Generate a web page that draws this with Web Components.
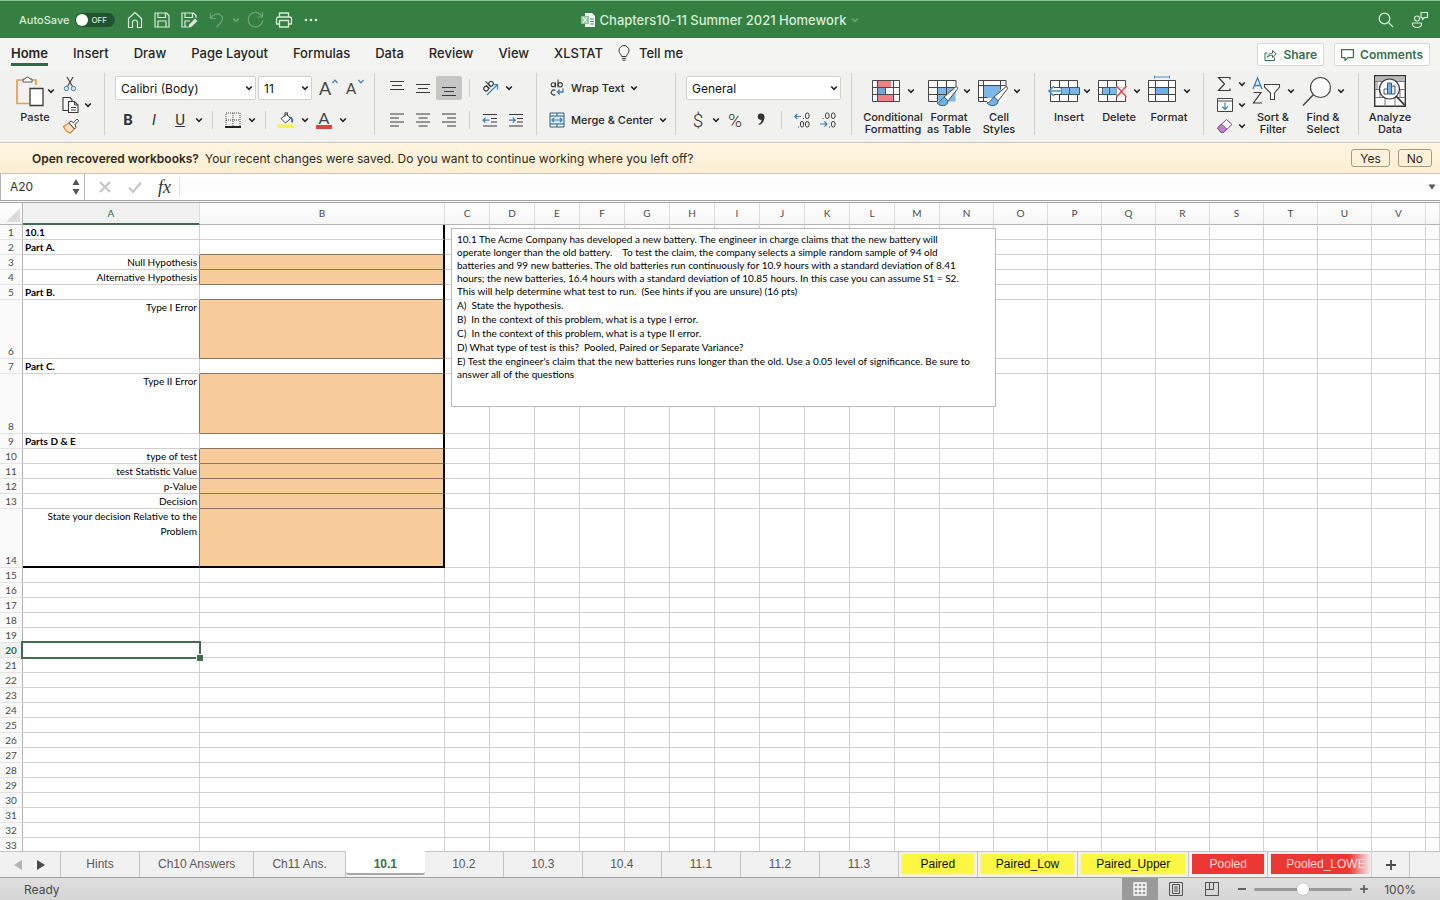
<!DOCTYPE html>
<html lang="en">
<head>
<meta charset="utf-8">
<title>Chapters10-11 Summer 2021 Homework</title>
<style>
html, body { margin: 0; height: 100%; }
body {
  display: flex; flex-direction: column; overflow: hidden;
  font-family: Inter, "Liberation Sans", sans-serif; font-size: 12px; color: #262626;
  background: #f2f2f1;
}
workbook-grid { flex: 1 1 0; min-height: 0; }
</style>
</head>
<body>
<title-bar></title-bar>
<menu-tabs></menu-tabs>
<ribbon-bar></ribbon-bar>
<notice-bar><b slot="title">Open recovered workbooks?</b>Your recent changes were saved. Do you want to continue working where you left off?</notice-bar>
<formula-bar></formula-bar>
<workbook-grid></workbook-grid>
<sheet-tabs></sheet-tabs>
<status-bar></status-bar>

<script>
const define = (name, html, setup) => {
  const tpl = document.createElement('template');
  tpl.innerHTML = html;
  customElements.define(name, class extends HTMLElement {
    constructor() {
      super();
      this.attachShadow({ mode: 'open' }).append(tpl.content.cloneNode(true));
    }
    connectedCallback() { if (setup) setup(this, this.shadowRoot); }
  });
};

/* name: [width, height, markup] */
const K = 'fill="none" stroke="#3b3b3b"';
const B = 'fill="none" stroke="#3f7fae"';
const ICONS = {
  chev: [8, 8, '<path d="M1.2 2.5 4 5.4 6.8 2.5" fill="none" stroke="currentColor" stroke-width="1.6"/>'],
  home: [16, 18, '<path d="M1.5 7.5 8 1.5l6.5 6v9h-4v-5a2.5 2.5 0 0 0-5 0v5h-4z" fill="none" stroke="currentColor" stroke-width="1.2" stroke-linejoin="round"/>'],
  save: [16, 16, '<path d="M1 1h11.500L15 3.500V15H1zM4 1v4.500h7.500V1M4 15V9h8v6" fill="none" stroke="currentColor" stroke-width="1.200" stroke-linejoin="round"/>'],
  saveas: [17, 16, '<path d="M7 15H1V1h11.500L15 3.500V6M4 1v4.500h7.500V1M4 15V9h5" fill="none" stroke="currentColor" stroke-width="1.200"/><path d="M14 6.500l2.500 2.500-6 5.800-3.200 1 1-3.300z" fill="currentColor"/>'],
  undo: [16, 16, '<path d="M1.500 1v5.500H7M1.800 6.300C4 2.500 8 .500 11.500 3c3 2.300 2.300 5.800 0 8L7.500 15" fill="none" stroke="currentColor" stroke-width="1.200"/>'],
  redo: [17, 17, '<path d="M15.500 1v5h-5M15.200 6A7.200 7.200 0 1 0 15.700 9" fill="none" stroke="currentColor" stroke-width="1.200"/>'],
  print: [18, 16, '<path d="M4.500 5V1h9v4M4.500 12H1.500V7a2 2 0 0 1 2-2h11a2 2 0 0 1 2 2v5h-3M4.500 8.500h9V15h-9z" fill="none" stroke="currentColor" stroke-width="1.300" stroke-linejoin="round"/>'],
  dots: [14, 16, '<circle cx="2" cy="8" r="1.300" fill="currentColor"/><circle cx="7" cy="8" r="1.300" fill="currentColor"/><circle cx="12" cy="8" r="1.300" fill="currentColor"/>'],
  file: [14, 14, '<path d="M4 0h7l3 3v11H4z" fill="#f4fbf4"/><path d="M9 6h4M9 8.500h4M9 11h4" stroke="#4c9a5c"/><path d="M0 3h8v8H0z" fill="#8cc79a"/><path d="M2 4.500l4 5M6 4.500l-4 5" stroke="#fff" stroke-width="1.200"/>'],
  search: [16, 16, '<circle cx="6.500" cy="6.500" r="5.300" fill="none" stroke="currentColor" stroke-width="1.200"/><path d="M10.400 10.400 15 15" stroke="currentColor" stroke-width="1.300"/>'],
  people: [18, 18, '<circle cx="6" cy="7.500" r="2.500" fill="none" stroke="currentColor" stroke-width="1.200"/><path d="M1.500 12h9c.500 3-1.500 4.500-4.500 4.500S1 15 1.500 12zM10 1.500h6.500v5h-3l-2 2v-2H10z" fill="none" stroke="currentColor" stroke-width="1.200" stroke-linejoin="round"/>'],
  bulb: [12, 16, `<path d="M3.700 11.500C3.500 9.500 1 8.500 1 5.600a5 5 0 0 1 10 0c0 2.900-2.500 3.900-2.700 5.900zM4 13.400h4M4.500 15.200h3" ${K}/>`],
  share: [13, 12, '<path d="M3.500 4H1v7.500h9.500V8.500M3.500 8.500c.200-3 2-4.300 5-4.300V1.500L12.300 5 8.500 8.500V6.200c-2.500-.100-4 .600-5 2.300z" fill="none" stroke="#35704c" stroke-linejoin="round"/>'],
  comment: [13, 12, '<path d="M.600.600h11.800v8H7L4 11.500V8.600H.600z" fill="none" stroke="#35704c" stroke-width="1.200" stroke-linejoin="round"/>'],

  paste: [28, 32, '<path d="M7 5H1v23.500h12M15 5h5v5" fill="none" stroke="#e3a04d" stroke-width="1.700"/><path d="M7 7V4h2a2.600 2.600 0 0 1 5 0h2v3z" fill="#fff" stroke="#555"/><path d="M14 13.500h13v17H14z" fill="#fff" stroke="#3b3b3b" stroke-width="1.300"/>'],
  cut: [16, 16, `<path d="M5 1l5.500 9.500M11 1 5.500 10.500" ${K} stroke-width="1.100"/><circle cx="4.500" cy="12.500" r="2.200" fill="#d9ebf7" stroke="#3f7fae"/><circle cx="11.500" cy="12.500" r="2.200" fill="#d9ebf7" stroke="#3f7fae"/>`],
  copy: [18, 18, '<path d="M1 1.500h7l2 2v11H1z" fill="#f7f7f7" stroke="#3b3b3b" stroke-width="1.100"/><path d="M6.500 5.500h6l3.500 3.500v7.500H6.500z" fill="#fff" stroke="#3b3b3b" stroke-width="1.100"/><path d="M12.500 5.500V9H16M9 11.500h5M9 14h5" fill="none" stroke="#3b3b3b"/>'],
  painter: [18, 16, '<path d="M1.500 8.500 7 5l5.500 5.500-4 4.500c-3-.500-5.500-3-7-6.500z" fill="#fbe3c4" stroke="#d98a3c" stroke-width="1.300"/><path d="M7 4.500l2-1.500 2.500 1.800L15 1l1.800 1.800-3.800 3.700 1 3-1.500 1.500z" fill="#fff" stroke="#444"/>'],
  grow: [18, 18, `<path d="M12.500 5l2.500-2.800L17.500 5" ${B} stroke-width="1.200"/>`],
  shrink: [18, 18, `<path d="M12.500 2l2.500 2.800L17.500 2" ${B} stroke-width="1.200"/>`],
  borders: [16, 16, '<path d="M1 1h14v14H1zM8 1v14M1 8h14" fill="none" stroke="#444" stroke-dasharray="1 1"/><path d="M0 15h16" stroke="#222" stroke-width="2"/>'],
  bucket: [18, 16, '<path d="M1 12.500h15V16H1z" fill="#f7f34b"/><path d="M4 6.500 9.500 2l4 4.500L8.500 11z" fill="#fff" stroke="#444" stroke-linejoin="round"/><path d="M8 5V.800h2.500V4" fill="none" stroke="#444"/><path d="M12.500 5.500c2.500 0 3 2 2.500 5" fill="none" stroke="#2e6da4" stroke-width="1.800"/>'],
  top: [16, 18, `<path d="M1 2.500h14M3 6.500h10M1 10.500h14" ${K} stroke-width="1.100"/>`],
  mid: [16, 18, `<path d="M1 5.500h14M3 9.500h10M1 13.500h14" ${K} stroke-width="1.100"/>`],
  bottom: [16, 18, `<path d="M1 8.500h14M3 12.500h10M1 16.500h14" ${K} stroke-width="1.100"/>`],
  left: [16, 16, `<path d="M1 2h14M1 6h9M1 10h14M1 14h9" ${K} stroke-width="1.200"/>`],
  center: [16, 16, `<path d="M1 2h14M3.500 6h9M1 10h14M3.500 14h9" ${K} stroke-width="1.200"/>`],
  right: [16, 16, `<path d="M1 2h14M6 6h9M1 10h14M6 14h9" ${K} stroke-width="1.200"/>`],
  orient: [18, 18, `<g transform="rotate(-45 7 7)" ${K} stroke-width="1.100"><circle cx="3.800" cy="7.500" r="2.300"/><path d="M6.200 5v5M8.500 2v8"/><circle cx="10.800" cy="7.500" r="2.300"/></g><path d="M6 16 16 6M11.500 5.500H16.500V10.500" ${B} stroke-width="1.200"/>`],
  outdent: [16, 16, `<path d="M1 2.500h14M9 6.500h6M9 10h6M1 14h14" ${K} stroke-width="1.200"/><path d="M7.500 8.200H1M3.500 5.700 1 8.200l2.500 2.500" ${B} stroke-width="1.200"/>`],
  indent: [16, 16, `<path d="M1 2.500h14M9 6.500h6M9 10h6M1 14h14" ${K} stroke-width="1.200"/><path d="M1 8.200h6M4.800 5.700l2.500 2.500-2.500 2.500" ${B} stroke-width="1.200"/>`],
  wrap: [16, 18, `<g ${K} stroke-width="1.100"><circle cx="4.200" cy="5.800" r="2"/><path d="M6.500 3.500v4.800M9 .500v7.800M6.300 11.500a2.500 2.500 0 1 0 0 4"/><circle cx="11.200" cy="5.800" r="2.200"/></g><path d="M14 9.500v3.500H8.500M10.800 10.600 8.300 13l2.500 2.500" ${B} stroke-width="1.300"/>`],
  merge: [16, 16, `<path d="M1 4h14v8H1z" fill="#d3e8f8"/><path d="M1 1h14v14H1zM1 4h14M1 12h14M8 1v3M8 12v3" fill="none" stroke="#2f5f80"/><path d="M3 8h10M5 6 3 8l2 2M11 6l2 2-2 2" ${B} stroke-width="1.200"/>`],
  comma: [12, 16, '<path d="M6 1.500a3.300 3.300 0 0 1 3.500 3.500c0 4-2 6.500-5.500 8l-.500-.800C5.500 11 6.500 9.500 6.700 7.800 4.500 8.200 2.700 7 2.700 4.800A3.200 3.200 0 0 1 6 1.500z" fill="#333"/>'],
  incdec: [16, 16, `<g ${K}><rect x="11.500" y="1" width="3.500" height="5.500" rx="1.700"/><rect x="6.500" y="9.500" width="3" height="5.500" rx="1.500"/><rect x="11.500" y="9.500" width="3.500" height="5.500" rx="1.700"/><path d="M9 6.500h1M4 15h1"/></g><path d="M7 4.500H.800M3.300 2 .800 4.500 3.300 7" ${B} stroke-width="1.200"/>`],
  decdec: [16, 16, `<g ${K}><rect x="5.500" y="1" width="3.500" height="5.500" rx="1.700"/><rect x="11.500" y="1" width="3.500" height="5.500" rx="1.700"/><rect x="11.500" y="9.500" width="3.500" height="5.500" rx="1.700"/><path d="M2.500 6.500h1M9 15h1"/></g><path d="M0 12h7M4.500 9.500 7 12l-2.500 2.500" ${B} stroke-width="1.200"/>`],

  condfmt: [32, 32, '<path d="M.500 5.500h27v21H.500z" fill="#fff"/><path d="M6 6h13v6H6zM6 19h15v7H6z" fill="#ee8183"/><path d="M6 12h7v7H6z" fill="#6fa6dc"/><path d="M.500 5.500h27v21H.500zM.500 12.500h27M.500 19.500h27M5.500 5.500v21M21.500 5.500v21M13.500 12.500v7" fill="none" stroke="#4a4a4a"/>'],
  fmttable: [32, 32, '<path d="M.500 5.500h27v21H.500z" fill="#fff"/><path d="M9.500 12.500h18v14h-18z" fill="#7db7e8"/><path d="M28 12V5.500H.500v21H9M.500 12.500h27M.500 19.500h24M9.500 5.500v21M18.500 5.500v18" fill="none" stroke="#444"/><path d="M16 22 27 12.500c2-1.500 3.500 0 2 2L20 26z" fill="#fff" stroke="#444"/><path d="M17 22.500c-4 0-3 4-8 5.500 3 4 11 3.500 11-2z" fill="#76b0e0" stroke="#2f5f80"/>'],
  cellstyle: [32, 32, '<path d="M.500 5.500h27v21H.500z" fill="#fff"/><path d="M5.500 11h17v12h-17z" fill="#7db7e8"/><path d="M28 12V5.500H.500v21H9M.500 10.500h27M.500 22.500h9M5.500 5.500v21M22.500 5.500v9" fill="none" stroke="#444"/><path d="M16 22 27 12.500c2-1.500 3.500 0 2 2L20 26z" fill="#fff" stroke="#444"/><path d="M17 22.500c-4 0-3 4-8 5.500 3 4 11 3.500 11-2z" fill="#76b0e0" stroke="#2f5f80"/>'],
  insert: [32, 32, '<path d="M2.500 5.500h27v21h-27z" fill="#fff" stroke="#444"/><path d="M2.500 12.500h27M2.500 19.500h27M11.500 5.500v7M20.500 5.500v7M11.500 19.500v7M20.500 19.500v7" stroke="#444"/><path d="M13 12.500h18.500v7H13z" fill="#7db7e8" stroke="#2f5f80"/><path d="M21.500 12.500v7" stroke="#2f5f80"/><path d="M0 16l5-5h1v3h7v4H6v3H5z" fill="#fff"/><path d="M14 16H1M6 11l-5 5 5 5" fill="none" stroke="#4a8fc4" stroke-width="1.600"/>'],
  delete: [32, 32, '<path d="M.500 5.500h27v21H.500z" fill="#fff" stroke="#444"/><path d="M.500 12.500h27M.500 19.500h27M9.500 5.500v7M18.500 5.500v7M9.500 19.500v7M18.500 19.500v7" stroke="#444"/><path d="M4.500 12.500h14v7h-14z" fill="#7db7e8" stroke="#2f5f80"/><path d="M11.500 12.500v7" stroke="#2f5f80"/><path d="M18.500 11h10v11h-10z" fill="#fff" opacity=".8"/><path d="M18.500 11l10 11M28.500 11l-10 11" stroke="#dc4a4d" stroke-width="1.500"/>'],
  format: [32, 32, '<path d="M6.500 2h15M6.500 .500v3M21.500 .500v3" stroke="#4a8fc4"/><path d="M.500 5.500h27v21H.500z" fill="#fff"/><path d="M7 12.500h13v7H7z" fill="#6fb0ea"/><path d="M.500 5.500h27v21H.500zM.500 12.500h27M.500 19.500h27M7.500 5.500v21M20.500 5.500v21" fill="none" stroke="#444"/>'],
  sigma: [16, 16, `<path d="M14 3.500V1.500H2.500L8.500 8l-6 6.500H14v-2" ${K} stroke-width="1.200"/>`],
  filldown: [18, 16, '<path d="M1.500 1.500h15v13h-15z" fill="#fff" stroke="#444"/><path d="M1.500 4h15" stroke="#444"/><path d="M9 5.500v6.500M6 9.500l3 3 3-3" fill="none" stroke="#3f7fae" stroke-width="1.200"/>'],
  eraser: [18, 16, '<path d="M1.500 10 10.500 1.500l5.500 5-8.500 8H5z" fill="#fff" stroke="#7d4a86"/><path d="M1.500 10 5.500 6.200l5.500 5-3.500 3.300H5z" fill="#c77fd0" stroke="#7d4a86"/>'],
  sort: [32, 32, `<path d="M1 14 5.500 3 10 14M2.500 10.500h6" ${B} stroke-width="1.300"/><path d="M1.500 17.500H9L1.500 28H10" ${K} stroke-width="1.200"/><path d="M12.500 9.500h15v2.500l-5 6v6.500h-4V18l-6-6z" fill="#fff" stroke="#444" stroke-width="1.100"/>`],
  find: [32, 32, '<circle cx="18.500" cy="12.500" r="10" fill="#fff" stroke="#444" stroke-width="1.200"/><path d="M11.300 19.700 1 30.500" stroke="#444" stroke-width="1.400"/>'],
  analyze: [32, 32, '<path d="M.700.700h30.600v30.600H.700z" fill="#fff" stroke="#333" stroke-width="1.400"/><path d="M1.500 1.500h29v5h-29z" fill="#b9b9b9"/><path d="M1 6.500h30M1 14.500h30M1 22.500h30M11 22.500v9M21 22.500v9M6 14.500v8M26 14.500v8M3 6.500v8" stroke="#777"/><circle cx="15.500" cy="14" r="10" fill="#fff" stroke="#333" stroke-width="1.200"/><path d="M10 14h3.500v5H10z" fill="#fff" stroke="#555"/><path d="M13.500 8h4v11h-4z" fill="#6fb0ea" stroke="#2f5f80"/><path d="M17.500 11h3.500v8h-3.500z" fill="#d9ebf7" stroke="#555"/><path d="M22.500 21.500 30.500 30" stroke="#333" stroke-width="1.800"/>'],

  cancel: [14, 14, '<path d="M2 2l10 10M12 2 2 12" stroke="#c4c4c4" stroke-width="2"/>'],
  ok: [14, 14, '<path d="M1 7.500 5 12 13 2.500" fill="none" stroke="#c4c4c4" stroke-width="2"/>'],
  stepper: [8, 20, '<path d="M4 2 7.500 8H.500zM4 18 .500 12h7z" fill="#555"/>'],
  down: [8, 6, '<path d="M.500.500h7L4 5.500z" fill="#555"/>'],
  prev: [8, 10, '<path d="M8 0v10L0 5z" fill="#b4b4b4"/>'],
  next: [8, 10, '<path d="M0 0v10l8-5z" fill="#4a4a4a"/>'],
  plus: [12, 12, '<path d="M6 1v10M1 6h10" stroke="#4a4a4a" stroke-width="1.800"/>'],
  splus: [10, 10, '<path d="M5 1v8M1 5h8" stroke="#555" stroke-width="1.600"/>'],
  sminus: [10, 10, '<path d="M1 5h8" stroke="#555" stroke-width="1.800"/>'],
  vgrid: [14, 14, '<path d="M1 1h12v12H1zM1 5h12M1 9h12M5 1v12M9 1v12" fill="none" stroke="#fff" stroke-width="1.300"/>'],
  vpage: [14, 14, '<path d="M.500.500h13v13H.500zM3.500 2.500h7v9h-7zM5 5h4M5 7h4M5 9h4" fill="none" stroke="#555"/>'],
  vbreak: [14, 14, '<path d="M.500.500h13v13H.500zM.500 7.500h8v-7M4.500.500v7" fill="none" stroke="#555" stroke-width="1.100"/>'],
  corner: [16, 16, '<path d="M15 1v14H1z" fill="#dcdcdc"/>']
};

customElements.define('ui-icon', class extends HTMLElement {
  static observedAttributes = ['name'];
  constructor() { super(); this.attachShadow({ mode: 'open' }); }
  attributeChangedCallback() { this.draw(); }
  draw() {
    const icon = ICONS[this.getAttribute('name')];
    if (!icon) return;
    const [w, h, body] = icon;
    this.shadowRoot.innerHTML = `<style>:host{display:block;flex:none}svg{display:block}</style>
      <svg width="${w}" height="${h}" viewBox="0 0 ${w} ${h}" aria-hidden="true">${body}</svg>`;
  }
});

const RESET = `*{box-sizing:border-box}
button,input,select{font:inherit;color:inherit;background:none;border:0;padding:0;margin:0;border-radius:0}
button{display:flex;align-items:center;justify-content:center}`;

define('title-bar', `<style>${RESET}
:host{display:grid;grid-template-columns:1fr auto 1fr;align-items:center;height:38px;box-sizing:border-box;
  background:#367f42;border-top:1px solid #86c493;color:#d8ecd9;font-weight:500}
.side{display:flex;align-items:center;padding:0 11px 0 19px}
label{display:flex;align-items:center;gap:6px;font-size:11px;margin-right:12px}
.switch{display:flex;align-items:center;position:relative;width:40px;height:14px;border-radius:7px;background:#205430}
.switch input{appearance:none;width:12px;height:12px;margin-left:1px;border-radius:6px;background:#fff}
.switch span{font-size:8px;margin-left:3px;color:#d8ecd9}
.tools{display:flex;align-items:center;gap:11px}
.faded{opacity:.35}
.hist{margin:0 -4px}
.end{justify-content:flex-end;gap:17px}
h1{display:flex;align-items:center;gap:5px;margin:0;font-size:13px;font-weight:500}
</style>
<div class="side">
  <label>AutoSave <span class="switch"><input type="checkbox" role="switch" aria-label="AutoSave"><span>OFF</span></span></label>
  <div class="tools">
    <button aria-label="Home"><ui-icon name="home"></ui-icon></button>
    <button aria-label="Save"><ui-icon name="save"></ui-icon></button>
    <button aria-label="Save as"><ui-icon name="saveas"></ui-icon></button>
    <button class="faded" aria-label="Undo"><ui-icon name="undo"></ui-icon></button>
    <button class="faded hist" aria-label="Undo history"><ui-icon name="chev"></ui-icon></button>
    <button class="faded" aria-label="Redo"><ui-icon name="redo"></ui-icon></button>
    <button aria-label="Print"><ui-icon name="print"></ui-icon></button>
    <button aria-label="More"><ui-icon name="dots"></ui-icon></button>
  </div>
</div>
<h1><ui-icon name="file"></ui-icon><span>Chapters10-11 Summer 2021 Homework</span><ui-icon class="faded" name="chev"></ui-icon></h1>
<div class="side end">
  <button aria-label="Search"><ui-icon name="search"></ui-icon></button>
  <button aria-label="Share status"><ui-icon name="people"></ui-icon></button>
</div>`);

define('menu-tabs', `<style>${RESET}
:host{display:flex;align-items:center;justify-content:space-between;height:33px;padding:0 10px 0 11px;background:#f4f4f3;font-size:13px;font-weight:500}
nav{display:flex;align-items:center;gap:25px;padding-bottom:4px}
a{color:inherit;text-decoration:none;line-height:20px;padding-top:3px;border-bottom:3px solid transparent}
a.on{font-weight:600;border-color:#2f6b45}
.tell{display:flex;align-items:center;gap:9px;margin-left:-10px}
.actions{display:flex;gap:10px}
.actions button{gap:6px;height:23px;padding:0 6px;background:#fff;border:1px solid #ddd6d6;border-radius:2px;color:#35704c;font-weight:600;font-size:12px}
</style>
<nav><a class="on" href="#home">Home</a><a href="#insert">Insert</a><a href="#draw">Draw</a><a href="#layout">Page Layout</a><a href="#formulas">Formulas</a><a href="#data">Data</a><a href="#review">Review</a><a href="#view">View</a><a href="#xlstat">XLSTAT</a><button class="tell"><ui-icon name="bulb"></ui-icon>Tell me</button></nav>
<div class="actions"><button><ui-icon name="share"></ui-icon>Share</button><button><ui-icon name="comment"></ui-icon>Comments</button></div>`);

define('ribbon-group', `<style>
:host{display:flex;box-sizing:border-box;height:62px;border-right:1px solid #cfcfcf}
:host([last]){border-right:0}
</style><slot></slot>`);

define('big-button', `<style>${RESET}
:host{display:block;width:50px}
button{flex-direction:column;justify-content:flex-start;width:100%;font-size:11px;line-height:12px;font-weight:500;color:#262626;padding-top:2px}
.pic{display:flex;align-items:center;gap:3px;height:32px;margin-bottom:4px}
.text{text-align:center;white-space:nowrap}
</style><button><span class="pic"><ui-icon class="main"></ui-icon><ui-icon class="chev" name="chev"></ui-icon></span><span class="text"><slot></slot></span></button>`,
(el, root) => {
  root.querySelector('.main').setAttribute('name', el.getAttribute('icon'));
  if (el.hasAttribute('plain')) root.querySelector('.chev')?.remove();
});

define('ribbon-bar', `<style>${RESET}
:host{display:grid;grid-template-columns:105px 270px 162px 139px 176px 183px 169px 155px 1fr;
  height:71px;box-sizing:border-box;padding-top:2px;background:#f1f1f0}
.rows{display:flex;flex-direction:column;gap:8px;padding-top:3px}
.row{display:flex;align-items:center;height:24px}
.stack{display:flex;flex-direction:column;justify-content:space-between;padding-top:2px;height:62px}
.stack button{gap:8px;height:18px;justify-content:flex-start}
.pick{position:relative;display:flex;align-items:center;height:24px;background:#fff;border:1px solid #d0d0d0;border-radius:2px}
.pick select{appearance:none;width:100%;height:100%;padding-left:5px;font-size:12px;color:#111}
.pick ui-icon{position:absolute;right:2px}
.cell{width:26px;height:24px;flex:none}
.cell.on{background:#c6c6c6;border-radius:2px}
.arrow{width:12px;height:24px;flex:none}
.sep{width:1px;height:18px;background:#cfcfcf;flex:none;margin:0 7px}
.wide{gap:6px;font-size:11px;font-weight:500;white-space:nowrap;height:24px;justify-content:flex-start}
b,i,u,.glyph{font-family:Roboto,sans-serif;font-size:15px;color:#333}
i,u{font-weight:400}
.glyph{font-size:19px;font-weight:300}
.aa{position:relative;font-family:Lato,sans-serif;color:#444;font-size:18px}
.aa.small{font-size:15px}
.aa ui-icon{position:absolute;right:0;top:2px}
.fc{flex-direction:column;font-family:Lato,sans-serif;font-size:16px;line-height:14px;color:#444}
.fc::after{content:"";width:16px;height:4px;background:#cf4a45}
</style>
<ribbon-group style="padding-left:10px">
  <big-button icon="paste" style="width:50px">Paste</big-button>
  <div class="stack" style="margin-left:2px">
    <button aria-label="Cut"><ui-icon name="cut"></ui-icon></button>
    <button aria-label="Copy" style="gap:4px"><ui-icon name="copy"></ui-icon><ui-icon name="chev"></ui-icon></button>
    <button aria-label="Format painter"><ui-icon name="painter"></ui-icon></button>
  </div>
</ribbon-group>
<ribbon-group style="padding-left:10px">
  <div class="rows">
    <div class="row">
      <div class="pick" style="width:141px"><select aria-label="Font"><option>Calibri (Body)</option></select><ui-icon name="chev"></ui-icon></div>
      <div class="pick" style="width:54px;margin-left:2px"><select aria-label="Font size"><option>11</option></select><ui-icon name="chev"></ui-icon></div>
      <button class="cell aa" aria-label="Increase font size">A<ui-icon name="grow"></ui-icon></button>
      <button class="cell aa small" aria-label="Decrease font size">A<ui-icon name="shrink"></ui-icon></button>
    </div>
    <div class="row">
      <button class="cell" aria-label="Bold"><b>B</b></button>
      <button class="cell" aria-label="Italic"><i>I</i></button>
      <button class="cell" aria-label="Underline"><u>U</u></button>
      <button class="arrow" aria-label="Underline style"><ui-icon name="chev"></ui-icon></button>
      <span class="sep"></span>
      <button class="cell" aria-label="Borders"><ui-icon name="borders"></ui-icon></button>
      <button class="arrow" aria-label="Border style"><ui-icon name="chev"></ui-icon></button>
      <span class="sep"></span>
      <button class="cell" aria-label="Fill colour"><ui-icon name="bucket"></ui-icon></button>
      <button class="arrow" aria-label="Fill colours"><ui-icon name="chev"></ui-icon></button>
      <button class="cell fc" aria-label="Font colour">A</button>
      <button class="arrow" aria-label="Font colours"><ui-icon name="chev"></ui-icon></button>
    </div>
  </div>
</ribbon-group>
<ribbon-group style="padding-left:9px">
  <div class="rows">
    <div class="row">
      <button class="cell" aria-label="Top align"><ui-icon name="top"></ui-icon></button>
      <button class="cell" aria-label="Middle align"><ui-icon name="mid"></ui-icon></button>
      <button class="cell on" aria-label="Bottom align"><ui-icon name="bottom"></ui-icon></button>
      <span class="sep"></span>
      <button class="cell" aria-label="Orientation"><ui-icon name="orient"></ui-icon></button>
      <button class="arrow" aria-label="Orientation options"><ui-icon name="chev"></ui-icon></button>
    </div>
    <div class="row">
      <button class="cell" aria-label="Align left"><ui-icon name="left"></ui-icon></button>
      <button class="cell" aria-label="Align centre"><ui-icon name="center"></ui-icon></button>
      <button class="cell" aria-label="Align right"><ui-icon name="right"></ui-icon></button>
      <span class="sep"></span>
      <button class="cell" aria-label="Decrease indent"><ui-icon name="outdent"></ui-icon></button>
      <button class="cell" aria-label="Increase indent"><ui-icon name="indent"></ui-icon></button>
    </div>
  </div>
</ribbon-group>
<ribbon-group style="padding-left:12px">
  <div class="rows">
    <button class="wide"><ui-icon name="wrap"></ui-icon>Wrap Text<ui-icon name="chev"></ui-icon></button>
    <button class="wide"><ui-icon name="merge"></ui-icon>Merge &amp; Center<ui-icon name="chev"></ui-icon></button>
  </div>
</ribbon-group>
<ribbon-group style="padding-left:10px">
  <div class="rows">
    <div class="pick" style="width:155px"><select aria-label="Number format"><option>General</option></select><ui-icon name="chev"></ui-icon></div>
    <div class="row">
      <button class="cell glyph" style="width:24px" aria-label="Currency">$</button>
      <button class="arrow" aria-label="Currencies"><ui-icon name="chev"></ui-icon></button>
      <button class="cell glyph" aria-label="Percent">%</button>
      <button class="cell" aria-label="Thousands separator"><ui-icon name="comma"></ui-icon></button>
      <span class="sep"></span>
      <button class="cell" aria-label="Increase decimal"><ui-icon name="incdec"></ui-icon></button>
      <button class="cell" aria-label="Decrease decimal"><ui-icon name="decdec"></ui-icon></button>
    </div>
  </div>
</ribbon-group>
<ribbon-group style="padding-left:10px">
  <big-button icon="condfmt" style="width:62px">Conditional<br>Formatting</big-button>
  <big-button icon="fmttable">Format<br>as Table</big-button>
  <big-button icon="cellstyle">Cell<br>Styles</big-button>
</ribbon-group>
<ribbon-group style="padding-left:9px">
  <big-button icon="insert">Insert</big-button>
  <big-button icon="delete">Delete</big-button>
  <big-button icon="format">Format</big-button>
</ribbon-group>
<ribbon-group style="padding-left:12px">
  <div class="stack">
    <button aria-label="AutoSum" style="gap:6px"><ui-icon name="sigma"></ui-icon><ui-icon name="chev"></ui-icon></button>
    <button aria-label="Fill" style="gap:4px"><ui-icon name="filldown"></ui-icon><ui-icon name="chev"></ui-icon></button>
    <button aria-label="Clear" style="gap:4px"><ui-icon name="eraser"></ui-icon><ui-icon name="chev"></ui-icon></button>
  </div>
  <big-button icon="sort" style="margin-left:2px">Sort &amp;<br>Filter</big-button>
  <big-button icon="find">Find &amp;<br>Select</big-button>
</ribbon-group>
<ribbon-group last style="padding-left:6px">
  <big-button icon="analyze" plain>Analyze<br>Data</big-button>
</ribbon-group>`);

define('notice-bar', `<style>${RESET}
:host{display:flex;align-items:center;height:32px;box-sizing:border-box;padding:0 8px 0 32px;
  background:linear-gradient(#fef5df,#fbeed4);border:solid #c9c4b8;border-width:1px 0;color:#33291a}
.msg{flex:1}
::slotted(b){font-weight:600;margin-right:6px}
button{height:18px;padding:0 8px;margin-left:8px;border:1px solid #a89a80;border-radius:3px}
</style><div class="msg"><slot name="title"></slot><slot></slot></div><button>Yes</button><button>No</button>`);

define('formula-bar', `<style>${RESET}
:host{display:flex;align-items:center;height:29px;box-sizing:border-box;background:#fff;border-bottom:3px double #a2a2a2}
.name{display:flex;align-items:center;width:85px;height:26px;padding:0 4px 1px 9px;border:solid #b4b4b4;border-width:0 1px 0 1px;color:#333}
.name input{flex:1;min-width:0}
.tools{display:flex;align-items:center;gap:16px;padding:0 8px 0 13px}
.fx{font:italic 18px "Liberation Serif",serif;color:#333}
.formula{flex:1;height:20px;border-left:1px solid #e2e2e2;background:#fdfdfd}
.more{width:16px;height:26px}
</style>
<div class="name"><input aria-label="Name box" value="A20"><button aria-label="Step"><ui-icon name="stepper"></ui-icon></button></div>
<div class="tools"><button aria-label="Cancel"><ui-icon name="cancel"></ui-icon></button><button aria-label="Enter"><ui-icon name="ok"></ui-icon></button><button class="fx" aria-label="Insert function">fx</button></div>
<input class="formula" aria-label="Formula"><button class="more" aria-label="Expand"><ui-icon name="down"></ui-icon></button>`);

define('text-note', `<style>
:host{display:block;box-sizing:border-box;padding:4px 5px;background:#fff;border:1px solid #b9b9b9;line-height:13px;white-space:nowrap;color:#000}
::slotted(p){margin:0 0 1px}
</style><slot></slot>`);

define('workbook-grid', `<style>
*{box-sizing:border-box}
:host{display:block;position:relative;overflow:hidden;background:#fff;font-family:Lato,sans-serif;font-size:10px;color:#000}
table{width:100%;table-layout:fixed;border-collapse:separate;border-spacing:0}
th,td{padding:0;height:15px;line-height:14px;border:solid #d0d0d0;border-width:0 1px 1px 0;vertical-align:top;overflow:visible}
th{font-weight:400;color:#4a4a4a}
thead th{height:22px;line-height:20px;background:linear-gradient(#fff,#f6f6f6);border-color:#dcdcdc #dcdcdc #b4b4b4}
thead th:first-child{border-right-color:#b4b4b4}
thead ui-icon{margin:4px 0 0 5px}
thead th.sel{background:#f1f1f1;color:#2f6b45;border-bottom:2px solid #3f6b50}
tbody th{vertical-align:bottom;background:#fafafa;border-color:#b4b4b4;border-bottom-color:#e4e4e4}
tbody th.sel{color:#2f6b45;background:#f1f1f1;font-weight:700}
td.a{text-align:right;padding:0 2px}
td.a.head{text-align:left;font-weight:700}
td.multi{line-height:15px}
td.fill{background:#f8cb9a}
td.line{border-bottom-color:#8b7560}
td.edge{border-right-color:#8b7560}
td.thick-r{border-right:2px solid #000}
td.thick-b{border-bottom:2px solid #000}
td.active{position:relative}
td.active::before{content:"";position:absolute;inset:-2px;border:2px solid #3f6b50}
td.active::after{content:"";position:absolute;right:-4px;bottom:-4px;width:6px;height:6px;background:#3f6b50;border:solid #fff;border-width:1px 0 0 1px}
text-note{position:absolute;left:451px;top:25px;width:545px;height:179px}
</style>
<table aria-label="Sheet 10.1"><colgroup></colgroup><thead><tr></tr></thead><tbody></tbody></table>
<text-note>
<p>10.1 The Acme Company has developed a new battery. The engineer in charge claims that the new battery will<br>operate longer than the old battery. &nbsp;&nbsp; To test the claim, the company selects a simple random sample of 94 old<br>batteries and 99 new batteries. The old batteries run continuously for 10.9 hours with a standard deviation of 8.41<br>hours; the new batteries, 16.4 hours with a standard deviation of 10.85 hours. In this case you can assume S1 = S2.<br>This will help determine what test to run. &nbsp;(See hints if you are unsure) (16 pts)</p>
<p>A) &nbsp;State the hypothesis.</p>
<p>B) &nbsp;In the context of this problem, what is a type I error.</p>
<p>C) &nbsp;In the context of this problem, what is a type II error.</p>
<p>D) What type of test is this? &nbsp;Pooled, Paired or Separate Variance?</p>
<p>E) Test the engineer's claim that the new batteries runs longer than the old. Use a 0.05 level of significance. Be sure to<br>answer all of the questions</p>
</text-note>`, (el, root) => {
  const letters = 'ABCDEFGHIJKLMNOPQRSTUV'.split('');
  const widths = letters.map((c, i) => c === 'A' ? 177 : c === 'B' ? 245 : i < 13 ? 45 : 54);
  root.querySelector('colgroup').innerHTML = [23, ...widths].map(w => `<col style="width:${w}px">`).join('') + '<col>';
  root.querySelector('thead tr').innerHTML = '<th><ui-icon name="corner"></ui-icon></th>' +
    letters.map(c => `<th scope="col"${c === 'A' ? ' class="sel"' : ''}>${c}</th>`).join('') + '<th></th>';
  const labels = { 1: '10.1', 2: 'Part A.', 3: 'Null Hypothesis', 4: 'Alternative Hypothesis', 5: 'Part B.', 6: 'Type I Error',
    7: 'Part C.', 8: 'Type II Error', 9: 'Parts D &amp; E', 10: 'type of test', 11: 'test Statistic Value', 12: 'p-Value',
    13: 'Decision', 14: 'State your decision Relative to the<br>Problem' };
  const heads = [1, 2, 5, 7, 9], heights = { 6: 59, 8: 60, 14: 59 };
  const filled = n => n > 2 && n < 15 && !heads.includes(n);
  let html = '';
  for (let n = 1; n <= 33; n++) {
    const a = ['a'], b = [];
    if (heads.includes(n)) a.push('head');
    if (n === 14) { a.push('thick-b', 'multi'); b.push('thick-b'); }
    if (n === 20) a.push('active');
    if (filled(n)) { a.push('edge'); b.push('fill'); }
    if (filled(n) || filled(n + 1)) b.push('line');
    if (n < 15) b.push('thick-r');
    html += `<tr${heights[n] ? ` style="height:${heights[n]}px"` : ''}><th scope="row"${n === 20 ? ' class="sel"' : ''}>${n}</th>` +
      `<td class="${a.join(' ')}">${labels[n] || ''}</td><td class="${b.join(' ')}"></td>` + '<td></td>'.repeat(21) + '</tr>';
  }
  root.querySelector('tbody').innerHTML = html;
});

define('sheet-tab', `<style>${RESET}
:host{display:block;flex:none;min-width:79px;height:25px;border-right:1px solid #c4c4c4;box-sizing:border-box;padding:2px 0 0}
button{width:100%;height:20px;padding:0 18px;color:#5a5a5a;white-space:nowrap}
:host([active]){padding:0;margin-top:-1px;background:#fff;border:0;border-bottom:2px solid #a8a8a8;border-radius:0 0 3px 3px;height:24px}
:host([active]) button{color:#35704c;font-weight:700;height:25px}
:host([color]){padding:2px 3px 0}
:host([color]) button{padding:0 15px}
:host([color=yellow]) button{background:#fbf742;color:#111;box-shadow:0 0 2px #fbf742}
:host([color=red]) button{background:#ec3833;color:#fbdcda}
</style><button><slot></slot></button>`);

define('sheet-tabs', `<style>${RESET}
:host{display:flex;height:26px;box-sizing:border-box;background:#f1f1f1;border-top:1px solid #c4c4c4;font:12px "Liberation Sans",Arial,sans-serif}
.nav{display:flex;align-items:center;gap:15px;width:61px;padding:0 14px;border-right:1px solid #c4c4c4;flex:none}
.tabs{display:flex;width:1311px;flex:0 1 auto;min-width:0;overflow:hidden;margin-top:-1px;padding-top:1px;position:relative;border-right:1px solid #d4d4d4}
.fade{position:absolute;right:0;top:2px;bottom:0;width:22px;background:linear-gradient(90deg,transparent,#f1f1f1)}
.add{width:38px;border-right:1px solid #c4c4c4;flex:none}
</style>
<div class="nav"><button aria-label="Previous sheets"><ui-icon name="prev"></ui-icon></button><button aria-label="Next sheets"><ui-icon name="next"></ui-icon></button></div>
<div class="tabs">
<sheet-tab>Hints</sheet-tab><sheet-tab>Ch10 Answers</sheet-tab><sheet-tab>Ch11 Ans.</sheet-tab><sheet-tab active>10.1</sheet-tab><sheet-tab>10.2</sheet-tab><sheet-tab>10.3</sheet-tab><sheet-tab>10.4</sheet-tab><sheet-tab>11.1</sheet-tab><sheet-tab>11.2</sheet-tab><sheet-tab>11.3</sheet-tab><sheet-tab color="yellow">Paired</sheet-tab><sheet-tab color="yellow">Paired_Low</sheet-tab><sheet-tab color="yellow">Paired_Upper</sheet-tab><sheet-tab color="red">Pooled</sheet-tab><sheet-tab color="red">Pooled_LOWE</sheet-tab>
<div class="fade"></div></div>
<button class="add" aria-label="Add sheet"><ui-icon name="plus"></ui-icon></button>`);

define('status-bar', `<style>${RESET}
:host{display:flex;align-items:center;height:23px;box-sizing:border-box;padding:0 24px;border-top:1px solid #a0a0a0;background:linear-gradient(#e0e0e0,#d5d5d5);color:#4a4a4a}
.state{flex:1}
.view{width:36px;height:22px}
.view.on{background:#9a9a9a}
input{appearance:none;width:98px;height:14px;margin:0 7px}
input::-webkit-slider-runnable-track{height:3px;border-radius:2px;background:#9a9a9a}
input::-webkit-slider-thumb{appearance:none;width:12px;height:12px;margin-top:-5px;border-radius:6px;background:#fff;box-shadow:0 0 1px #777}
.pct{width:32px;margin-left:15px;text-align:right}
</style>
<span class="state">Ready</span>
<button class="view on" aria-label="Normal view"><ui-icon name="vgrid"></ui-icon></button>
<button class="view" aria-label="Page layout view"><ui-icon name="vpage"></ui-icon></button>
<button class="view" aria-label="Page break preview"><ui-icon name="vbreak"></ui-icon></button>
<button aria-label="Zoom out" style="margin-left:7px"><ui-icon name="sminus"></ui-icon></button>
<input type="range" aria-label="Zoom" min="0" max="200" value="100">
<button aria-label="Zoom in"><ui-icon name="splus"></ui-icon></button>
<span class="pct">100%</span>`);
</script>
</body>
</html>
